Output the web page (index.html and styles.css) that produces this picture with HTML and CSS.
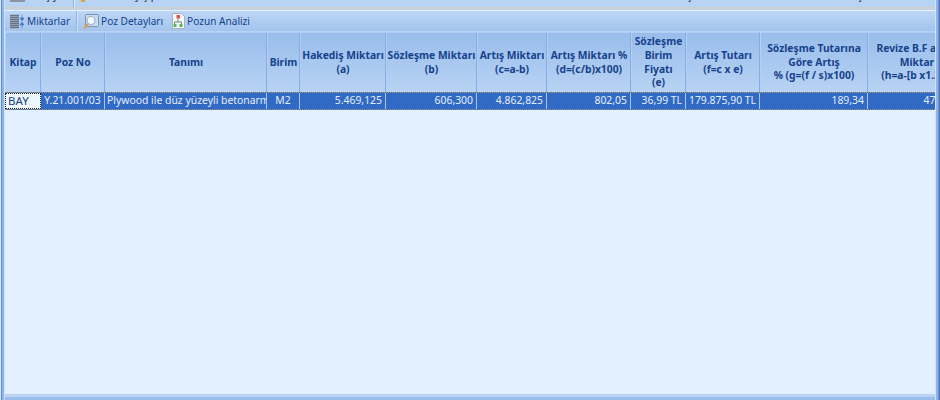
FILE: index.html
```html
<!DOCTYPE html>
<html lang="tr">
<head>
<meta charset="utf-8">
<title>Miktarlar</title>
<link rel="stylesheet" href="styles.css">
</head>
<body>
<div class="frame">
  <div class="content">
    <div class="toppanel">
      <span class="topicon"></span>
      <span class="toptext first">ç y</span>
      <span class="topsep"></span>
      <span class="topyellow"></span>
      <span class="toptext second">y ş p</span>
      <span class="toptext third">ş</span>
      <span class="toptext fourth">ç</span>
    </div>
    <div class="splitter"></div>
    <div class="toolbar">
      <button class="tool tool-miktar">
        <svg width="14" height="15" viewBox="0 0 14 15">
          <path d="M0 1.5h9M0 3.5h9M0 5.5h9M0 7.5h9M0 9.5h9M0 11.5h9M0 13.5h9" stroke="#6c737d" stroke-width="1.3"/>
          <path d="M10 4h4l-2 3zM12 .5v4M10 11h4l-2-3zM12 14.5v-4" fill="#3f78c8" stroke="#3f78c8" stroke-width=".6"/>
        </svg>
        <span>Miktarlar</span>
      </button>
      <span class="toolsep"></span>
      <button class="tool tool-detay">
        <svg width="16" height="17" viewBox="0 0 16 17">
          <rect x="2.5" y="1.5" width="13" height="12" rx="1" fill="#c9dbf0" stroke="#7f93ad"/>
          <circle cx="8" cy="7.5" r="4" fill="#f3f8fd" stroke="#9fb2c8" stroke-width="1.2"/>
          <path d="M5 11L1 15.5" stroke="#d8a25a" stroke-width="2.2"/>
        </svg>
        <span>Poz Detayları</span>
      </button>
      <button class="tool tool-analiz">
        <svg width="14" height="16" viewBox="0 0 14 16">
          <path d="M1.5.5h9l3 3v12h-12z" fill="#f3f6f8" stroke="#a8b2bc"/>
          <rect x="5.5" y="2" width="3.5" height="3.5" fill="#d9534a"/>
          <path d="M7 6v3M3.5 11V9h7v2" fill="none" stroke="#6b8f6b"/>
          <rect x="2.5" y="11" width="3" height="3" fill="#5bb05b"/>
          <rect x="8.5" y="11" width="3" height="3" fill="#5bb05b"/>
        </svg>
        <span>Pozun Analizi</span>
      </button>
    </div>
    <div class="grid">
      <div class="cols head">
        <div class="hcell">Kitap</div>
        <div class="hcell">Poz No</div>
        <div class="hcell">Tanımı</div>
        <div class="hcell">Birim</div>
        <div class="hcell">Hakediş Miktarı<br>(a)</div>
        <div class="hcell">Sözleşme Miktarı<br>(b)</div>
        <div class="hcell">Artış Miktarı<br>(c=a-b)</div>
        <div class="hcell">Artış Miktarı %<br>(d=(c/b)x100)</div>
        <div class="hcell">Sözleşme<br>Birim<br>Fiyatı<br>(e)</div>
        <div class="hcell">Artış Tutarı<br>(f=c x e)</div>
        <div class="hcell">Sözleşme Tutarına<br>Göre Artış<br>% (g=(f / s)x100)</div>
        <div class="hcell">Revize B.F aşımı<br>Miktar<br>(h=a-[b x1.30])</div>
      </div>
      <div class="cols row">
        <div class="cell focus">BAY</div>
        <div class="cell center">Y.21.001/03</div>
        <div class="cell">Plywood ile düz yüzeyli betonarme kalıp</div>
        <div class="cell center">M2</div>
        <div class="cell num">5.469,125</div>
        <div class="cell num">606,300</div>
        <div class="cell num">4.862,825</div>
        <div class="cell num">802,05</div>
        <div class="cell num">36,99 TL</div>
        <div class="cell num">179.875,90 TL</div>
        <div class="cell num">189,34</div>
        <div class="cell num">472,570</div>
      </div>
      <div class="empty"></div>
    </div>
    <div class="footer"></div>
  </div>
</div>
</body>
</html>
```
FILE: styles.css
```css
* { box-sizing: border-box; }
html, body { margin: 0; padding: 0; }
body {
  width: 940px;
  height: 400px;
  overflow: hidden;
  font-family: "Noto Sans", "Open Sans", sans-serif;
  font-size: 10.4px;
  color: #15428b;
}
.frame {
  width: 940px;
  height: 400px;
  padding: 0 5px 0 5px;
  background: linear-gradient(to right,
    #d8e6f8 0, #d8e6f8 1px,
    #5f8ede 1px, #5f8ede 2px,
    #8db5ea 2px, #8db5ea 4px,
    #cfe2fa 4px, #cfe2fa 936px,
    #8db5ea 936px, #8db5ea 938px,
    #5f8ede 938px, #5f8ede 939px,
    #5e7aa8 939px, #5e7aa8 940px);
}
.content {
  height: 400px;
  display: flex;
  flex-direction: column;
  overflow: hidden;
}

/* clipped upper panel */
.toppanel {
  height: 7px;
  flex: none;
  display: flex;
  overflow: hidden;
  background: #b8d4f5;
}
.topicon {
  width: 15px;
  height: 2px;
  margin-left: 5px;
  background: #8a94a2;
  flex: none;
}
.toptext {
  flex: none;
  margin-top: -12px;
  line-height: 14px;
  color: #1a1a1a;
  white-space: pre;
}
.toptext.first { margin-left: 20px; }
.toptext.second { margin-left: 50px; }
.toptext.third { margin-left: 530px; }
.toptext.fourth { margin-left: 165px; }
.topsep {
  width: 2px;
  height: 7px;
  margin-left: 15px;
  background: linear-gradient(to right, #8fb4e4 50%, #e3effc 50%);
  flex: none;
}
.topyellow {
  width: 4px;
  height: 2px;
  margin-left: 6px;
  background: #d9a441;
  flex: none;
}
.splitter {
  height: 4px;
  flex: none;
  background: linear-gradient(to bottom, #cfcfcf 0, #cfcfcf 2px, #b8d4f5 2px, #b8d4f5 3px, #eaf3fd 3px);
}

/* toolbar */
.toolbar {
  height: 21px;
  flex: none;
  display: flex;
  align-items: center;
  font-size: 10.1px;
  background: linear-gradient(to bottom, #bcd6f6 0, #a3c4ee 100%);
  border-bottom: 1px solid #b9d3f3;
}
.tool {
  display: flex;
  align-items: center;
  height: 20px;
  padding: 0;
  border: 0;
  background: none;
  font: inherit;
  color: #15428b;
  white-space: nowrap;
}
.tool svg { flex: none; }
.tool-miktar { margin-left: 5px; gap: 3px; }
.toolsep {
  width: 2px;
  height: 20px;
  margin-left: 6px;
  background: linear-gradient(to right, #8fb4e4 50%, #cfe2fa 50%);
  flex: none;
}
.tool-detay { margin-left: 5px; gap: 2px; }
.tool-analiz { margin-left: 8px; gap: 2px; }

/* grid */
.grid {
  flex: 1;
  min-height: 0;
  display: flex;
  flex-direction: column;
  overflow: hidden;
  background: #e3f0ff;
}
.cols {
  display: grid;
  grid-template-columns: 36px 64px 162px 33px 86px 91px 70px 84px 55px 74px 108px 98px;
  width: 1000px;
  flex: none;
}
.head {
  height: 60px;
  background: linear-gradient(to bottom, #98bdeb 0, #b8d3f4 100%);
}
.hcell {
  display: flex;
  align-items: center;
  justify-content: center;
  text-align: center;
  font-weight: 700;
  font-size: 10.3px;
  line-height: 13.6px;
  white-space: nowrap;
  overflow: hidden;
  border-right: 1px solid #84ade6;
  border-top: 1px solid #b4cff3;
  border-left: 1px solid #b4cff3;
}
.row {
  height: 18px;
  background: #316ac5;
  border-top: 1px dotted #b59a63;
  border-bottom: 1px dotted #9c8f80;
}
.cell {
  color: #e6eefb;
  line-height: 15px;
  padding: 0 2px;
  white-space: nowrap;
  overflow: hidden;
  border-right: 1px solid #a8c4ec;
}
.center { text-align: center; }
.num { text-align: right; padding-right: 3px; }
.focus {
  background: #eef7fa;
  color: #15428b;
  border: 1px dotted #222;
  line-height: 14px;
  padding: 0 2px;
  font-size: 11.5px;
}
.empty { flex: 1; }
.footer {
  height: 6px;
  flex: none;
  background: linear-gradient(to bottom, #b8d3f4 0, #b8d3f4 3px, #9abde9 3px);
}
```
